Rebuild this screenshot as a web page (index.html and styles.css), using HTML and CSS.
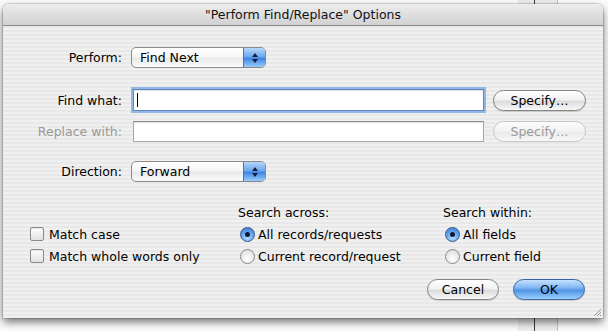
FILE: index.html
```html
<!DOCTYPE html>
<html lang="en">
<head>
  <meta charset="UTF-8">
  <title>"Perform Find/Replace" Options</title>
  <link rel="stylesheet" href="styles.css">
</head>
<body>
  <div class="desk">
    <div class="backwin"></div>
    <div class="backline"></div>

    <div class="dialog">
      <div class="titlebar">"Perform Find/Replace" Options</div>

      <div class="content">
        <div class="row r-perform">
          <span class="lbl">Perform:</span>
          <div class="popup">
            <span class="popup-text">Find Next</span>
            <span class="stepper">
              <svg width="8" height="12" viewBox="0 0 8 12"><path d="M4 1 L7 5 L1 5 Z M4 11 L7 7 L1 7 Z" fill="#14203a"/></svg>
            </span>
          </div>
        </div>

        <div class="row r-find">
          <span class="lbl">Find what:</span>
          <div class="field focus"><span class="caret"></span></div>
          <button class="btn">Specify…</button>
        </div>

        <div class="row r-replace">
          <span class="lbl disabled">Replace with:</span>
          <div class="field"></div>
          <button class="btn" disabled>Specify…</button>
        </div>

        <div class="row r-direction">
          <span class="lbl">Direction:</span>
          <div class="popup">
            <span class="popup-text">Forward</span>
            <span class="stepper">
              <svg width="8" height="12" viewBox="0 0 8 12"><path d="M4 1 L7 5 L1 5 Z M4 11 L7 7 L1 7 Z" fill="#14203a"/></svg>
            </span>
          </div>
        </div>

        <div class="options">
          <div class="col col-match">
            <div class="opt"></div>
            <div class="opt"><span class="check"></span>Match case</div>
            <div class="opt"><span class="check"></span>Match whole words only</div>
          </div>
          <div class="col col-across">
            <div class="opt heading">Search across:</div>
            <div class="opt"><span class="radio on"></span>All records/requests</div>
            <div class="opt"><span class="radio"></span>Current record/request</div>
          </div>
          <div class="col col-within">
            <div class="opt heading">Search within:</div>
            <div class="opt"><span class="radio on"></span>All fields</div>
            <div class="opt"><span class="radio"></span>Current field</div>
          </div>
        </div>

        <div class="actions">
          <button class="btn wide">Cancel</button>
          <button class="btn wide default">OK</button>
        </div>
      </div>

      <svg class="grip" width="10" height="10" viewBox="0 0 10 10">
        <path d="M9 2 L2 9 M9 5 L5 9 M9 8 L8 9" stroke="#9a9a9a" stroke-width="1"/>
      </svg>
    </div>
  </div>
</body>
</html>
```

FILE: styles.css
```css
body {
  margin: 0;
  background: #fff;
  font-family: "DejaVu Sans", "Noto Sans", sans-serif;
  font-size: 12.5px;
  color: #000;
}
.desk {
  position: relative;
  width: 608px;
  height: 331px;
  overflow: hidden;
  background: #fbfbfb;
}
.backwin {
  position: absolute;
  left: 518px;
  top: 0;
  width: 39px;
  height: 331px;
  background: #ededed;
  border-right: 1px solid #c4c4c4;
}
.backline {
  position: absolute;
  left: 534px;
  top: 0;
  width: 1px;
  height: 331px;
  background: #3a3a3a;
}
.dialog {
  position: absolute;
  left: 3px;
  top: 4px;
  width: 600px;
  height: 314px;
  border-radius: 6px 6px 0 0;
  background: repeating-linear-gradient(#f0f0f0 0 2px, #e8e8e8 2px 4px);
  box-shadow: 0 4px 9px rgba(0, 0, 0, 0.55), 0 0 0 1px rgba(0, 0, 0, 0.12);
}
.titlebar {
  height: 21px;
  line-height: 21px;
  text-align: center;
  border-radius: 6px 6px 0 0;
  background: linear-gradient(#ededed, #dcdcdc 60%, #d2d2d2);
  border-bottom: 1px solid #8c8c8c;
  color: #111;
}
.content {
  padding-top: 21px;
}
.row {
  display: grid;
  grid-template-columns: 119px 353px 93px;
  column-gap: 9px;
  align-items: center;
}
.r-find { margin-top: 21px; height: 22px; }
.r-replace { margin-top: 10px; height: 21px; }
.r-direction { margin-top: 19px; }
.lbl {
  text-align: right;
  line-height: 21px;
}
.lbl.disabled,
.btn:disabled {
  color: #9a9a9a;
}

/* popup menus */
.popup {
  width: 133px;
  height: 19px;
  display: flex;
  align-items: center;
  border: 1px solid #8a8a8a;
  border-radius: 5px;
  overflow: hidden;
  background: linear-gradient(#ffffff, #f6f6f6 45%, #e9e9e9 55%, #fbfbfb);
}
.popup-text {
  flex: 1;
  padding-left: 8px;
}
.stepper {
  width: 21px;
  height: 19px;
  display: flex;
  align-items: center;
  justify-content: center;
  border-left: 1px solid #4a73b0;
  background: linear-gradient(#b6d6fa, #6fa7ee 45%, #3f86e4 55%, #9acbfb);
}

/* text fields */
.field {
  margin-left: 2px;
  width: 349px;
  height: 19px;
  border: 1px solid #a8a8a8;
  border-top-color: #8a8a8a;
  background: #fff;
  box-shadow: inset 0 1px 1px rgba(0, 0, 0, 0.12);
  display: flex;
  align-items: center;
}
.field.focus {
  height: 20px;
  border-color: #5f87c0;
  box-shadow: 0 0 0 2px #92b6e6, inset 0 1px 1px rgba(0, 0, 0, 0.12);
}
.caret {
  width: 1px;
  height: 14px;
  margin-left: 3px;
  background: #000;
}

/* push buttons */
.btn {
  height: 21px;
  padding: 0;
  font: inherit;
  color: #000;
  border: 1px solid #858585;
  border-radius: 11px;
  background: linear-gradient(#ffffff, #f2f2f2 45%, #dcdcdc 55%, #f8f8f8);
  box-shadow: 0 1px 1px rgba(0, 0, 0, 0.15);
}
.btn:disabled {
  border-color: #c6c6c6;
  background: linear-gradient(#fbfbfb, #f4f4f4 45%, #ebebeb 55%, #f7f7f7);
  box-shadow: none;
}
.btn.wide {
  width: 72px;
}
.btn.default {
  border-color: #3a62a4;
  background: linear-gradient(#c6e1fd, #82b7f2 40%, #4f94e6 55%, #9dd0fd);
}

/* checkboxes and radios */
.options {
  margin-top: 19px;
  padding-left: 27px;
  display: grid;
  grid-template-columns: 208px 205px auto;
}
.opt {
  height: 22px;
  display: flex;
  align-items: center;
  white-space: nowrap;
}
.check {
  width: 12px;
  height: 12px;
  margin-right: 5px;
  border: 1px solid #8a8a8a;
  border-radius: 2px;
  background: linear-gradient(#ffffff, #f0f0f0 50%, #e2e2e2);
  box-shadow: inset 0 1px 1px rgba(0, 0, 0, 0.1);
}
.radio {
  position: relative;
  width: 13px;
  height: 13px;
  margin-left: 2px;
  margin-right: 3px;
  border: 1px solid #8a8a8a;
  border-radius: 50%;
  background: radial-gradient(circle at 50% 70%, #ffffff, #e4e4e4 70%, #cfcfcf);
}
.radio.on {
  border-color: #35598f;
  background: radial-gradient(circle at 50% 75%, #b8defe, #5f9fea 55%, #3477d0);
}
.radio.on::after {
  content: "";
  position: absolute;
  left: 4px;
  top: 4px;
  width: 5px;
  height: 5px;
  border-radius: 50%;
  background: #0d1a33;
}

.actions {
  margin-top: 12px;
  padding-right: 18px;
  display: flex;
  justify-content: flex-end;
  gap: 14px;
}
.grip {
  position: absolute;
  right: 1px;
  bottom: 1px;
}
```
